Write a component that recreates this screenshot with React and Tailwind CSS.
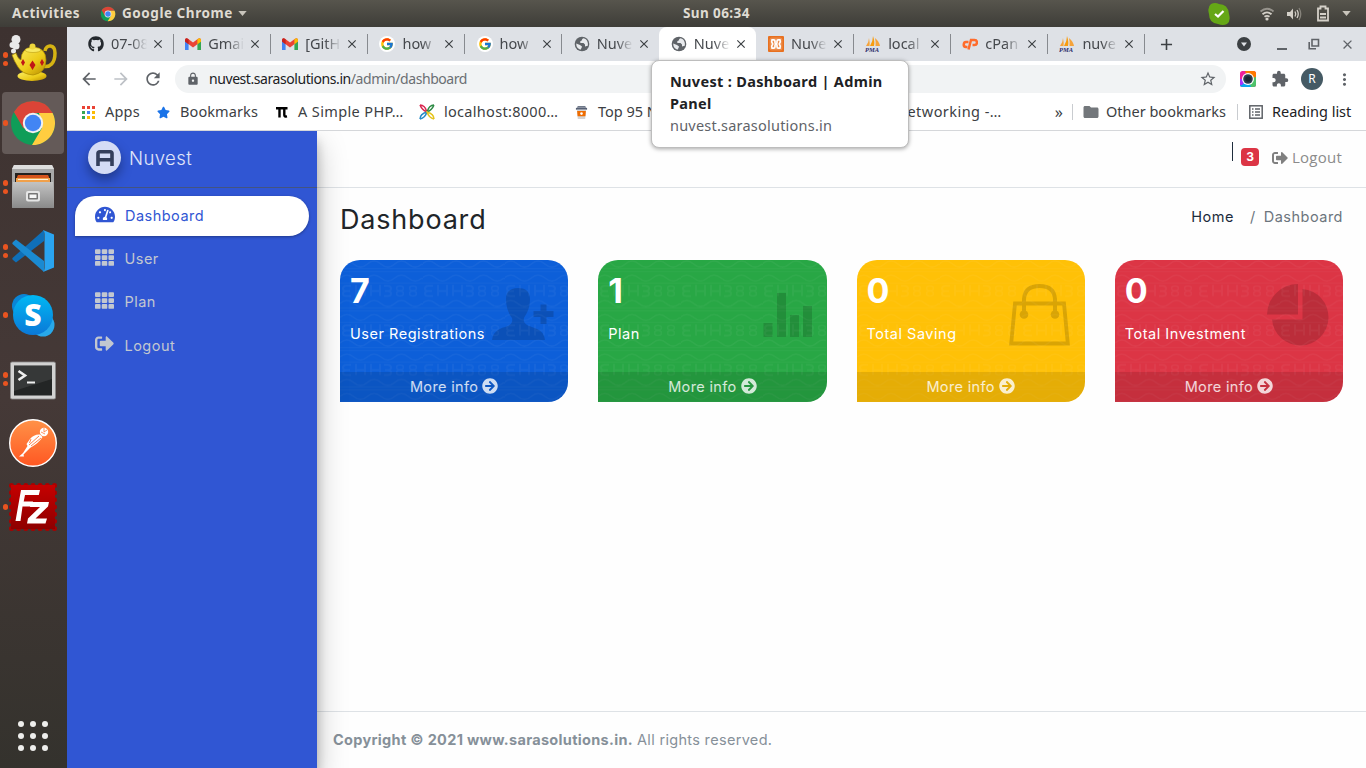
import React from "react";
import { FaGithub, FaTachometerAlt, FaTh, FaSignOutAlt, FaArrowCircleRight, FaStar } from "react-icons/fa";
import { FcGoogle } from "react-icons/fc";
import { MdLock, MdStarBorder, MdExtension, MdFolder, MdMoreVert, MdRefresh, MdArrowBack, MdArrowForward, MdClose, MdAdd } from "react-icons/md";

function ChromeLogo({ className }) {
  return (
    <svg viewBox="0 0 48 48" className={className}>
      <circle cx="24" cy="24" r="22" fill="#0f9d58" />
      <path d="M4.9 13A22 22 0 0 1 43.1 13Q44 14 43.6 14H24L14.5 29.5Z" fill="#db4437" />
      <path d="M43.6 14A22 22 0 0 1 23 46L33 29L30 14Z" fill="#ffcd40" />
      <circle cx="24" cy="24" r="10.2" fill="#f1f1f1" />
      <circle cx="24" cy="24" r="8.2" fill="#4285f4" />
    </svg>
  );
}

function Teapot() {
  return (
    <svg viewBox="0 0 48 48" className="size-12">
      <defs>
        <linearGradient id="tea" x1="0" y1="0" x2="1" y2="1">
          <stop offset="0" stopColor="#fdf06a" /><stop offset=".6" stopColor="#eccb18" /><stop offset="1" stopColor="#b78b00" />
        </linearGradient>
      </defs>
      <g fill="#e9e9e9"><circle cx="7" cy="4.500" r="4.500" /><circle cx="3.500" cy="10" r="3" /><circle cx="7" cy="11" r="3.500" /><circle cx="4.500" cy="16" r="2.500" /></g>
      <path d="M36 16C37 9 46 9 46 18C46 28 41 33 34 31" fill="none" stroke="#d6b313" strokeWidth="3.500" />
      <ellipse cx="23" cy="41" rx="14.500" ry="5" fill="url(#tea)" />
      <path d="M3 20L7 18Q9 24 12 25Q12 13 24 12Q37 13 37 25Q37 38 24 40Q13 39 9 32Q5 26 3 20Z" fill="url(#tea)" stroke="#a98600" strokeWidth=".7" />
      <ellipse cx="24" cy="15" rx="8" ry="2.500" fill="#f8e960" stroke="#b19009" strokeWidth=".5" />
      <circle cx="23.500" cy="11.500" r="3" fill="#eed63b" />
      <path d="M23.500 25.500L26.500 30L23.500 35L20.500 30ZM14 24L16 27.500L14 31L12 27.500ZM33 24L35 27.500L33 31L31 27.500Z" fill="#c01616" />
    </svg>
  );
}

function Cabinet() {
  return (
    <svg viewBox="0 0 48 48" className="size-12">
      <defs>
        <linearGradient id="cab" x1="0" y1="0" x2="0" y2="1"><stop offset="0" stopColor="#c3c3c3" /><stop offset="1" stopColor="#8a8a8a" /></linearGradient>
      </defs>
      <path d="M5 2H43L45 6V44H3V6Z" fill="#a8a8a8" />
      <path d="M5 2H43L45 6H3Z" fill="#dedede" />
      <rect x="6" y="10" width="36" height="11" fill="#24211f" />
      <path d="M8 14L9 12H39L40 14V21H8Z" fill="#d6541c" />
      <path d="M7 15H41V20H7Z" fill="#f0a04b" /><path d="M9 16H39V17H9Z" fill="#fff0d8" />
      <path d="M4 19H44L45 45H3Z" fill="url(#cab)" />
      <rect x="17" y="28" width="14" height="10.500" rx="2" fill="#e6e6e6" />
      <rect x="19" y="30" width="10" height="6.500" rx="1" fill="#777" /><rect x="20.500" y="31.500" width="7" height="3.500" fill="#f7f7f7" />
    </svg>
  );
}

function VsCode() {
  return (
    <svg viewBox="0 0 48 48" className="size-12">
      <path d="M35 3L3.500 31Q3 32 4 33L7 35.500L35 14Z" fill="#0f6fb8" />
      <path d="M35 45L3.500 17Q3 16 4 15L7 12.500L35 34Z" fill="#1a8ad2" />
      <path d="M34 3L45 7.500V40.500L34 45Q35.500 44 35.500 41V7Q35.500 4 34 3Z" fill="#2aa4f0" />
    </svg>
  );
}

function Skype() {
  return (
    <svg viewBox="0 0 48 48" className="size-12">
      <defs><linearGradient id="sky" x1="0" y1="0" x2="0" y2="1"><stop offset="0" stopColor="#00b8f4" /><stop offset="1" stopColor="#0b78d7" /></linearGradient></defs>
      <circle cx="15" cy="15" r="12" fill="#0a85d6" /><circle cx="34" cy="34" r="11.500" fill="#28a8ea" />
      <circle cx="24" cy="24" r="20" fill="url(#sky)" />
      <text x="24" y="35" textAnchor="middle" fontFamily="Open Sans, sans-serif" fontWeight="800" fontSize="30" fill="#fff">S</text>
    </svg>
  );
}

function Terminal() {
  return (
    <svg viewBox="0 0 48 48" className="size-12">
      <rect x="1.500" y="7" width="45" height="37" rx="1.500" fill="#d2d2d2" stroke="#8a8a8a" strokeWidth=".8" />
      <rect x="5" y="10.500" width="38" height="30" fill="#232525" />
      <path d="M5 11H43V24L5 36Z" fill="#fff" opacity=".09" />
      <path d="M9.500 16L16 20.500L9.500 25" fill="none" stroke="#eee" strokeWidth="2.600" />
      <path d="M18 27.500H26" stroke="#eee" strokeWidth="2" />
    </svg>
  );
}

function Postman() {
  return (
    <svg viewBox="0 0 48 48" className="size-12">
      <defs><linearGradient id="post" x1="0" y1="0" x2="0" y2="1"><stop offset="0" stopColor="#ff9248" /><stop offset="1" stopColor="#ff5722" /></linearGradient></defs>
      <circle cx="24" cy="24" r="23.300" fill="url(#post)" stroke="#fff" strokeWidth="1.400" />
      <circle cx="35" cy="13" r="4.200" fill="#fff" />
      <path d="M32 13L36 15M35 9V13L38 11" stroke="#ff7a3c" strokeWidth=".8" fill="none" />
      <path d="M31 15.500Q25 15 21 20L17.500 25L18.500 27L14 34L10 37.500L15 37.500L14.500 35.500L21 29Q30 24 33.500 18Z" fill="#fff" />
      <path d="M30 17L20 26M32 19L22 27M22 20L20.500 24" stroke="#ff7437" strokeWidth=".9" fill="none" />
    </svg>
  );
}

function FileZilla() {
  return (
    <svg viewBox="0 0 48 48" className="size-12">
      <defs><linearGradient id="fz" x1="0" y1="0" x2="0" y2="1"><stop offset="0" stopColor="#c50000" /><stop offset="1" stopColor="#8e0000" /></linearGradient></defs>
      <rect x="2.500" y="2.500" width="43" height="43" fill="none" stroke="#a90000" strokeWidth="5" strokeDasharray="0 7.170" strokeLinecap="round" />
      <rect x="2" y="2" width="44" height="44" fill="url(#fz)" />
      <path d="M12 7H31L29.800 12H16L14.700 18.500H24L22.800 23.500H13.500L11.500 38H6.500Z" fill="#fff" />
      <path d="M22 19H40L39 23.500L26.500 35.500H38L36.500 40.500H18L19 35.500L31 24H21Z" fill="#fff" />
    </svg>
  );
}

const dockItems = [
  { Icon: Teapot, dots: 2 },
  { Icon: () => <ChromeLogo className="size-12" />, dots: 1, active: true },
  { Icon: Cabinet, dots: 2 },
  { Icon: VsCode, dots: 2 },
  { Icon: Skype, dots: 1 },
  { Icon: Terminal, dots: 2 },
  { Icon: Postman, dots: 0 },
  { Icon: FileZilla, dots: 1 },
];

function Dock() {
  return (
    <aside className="flex w-[67px] shrink-0 flex-col bg-linear-to-b from-[#3d3230] via-[#453937] via-50% to-[#34322d]">
      {dockItems.map(({ Icon, dots, active }, i) => (
        <div key={i} className="flex h-16 items-center">
          <div className={active ? "ml-0.5 flex h-[62px] w-[62px] items-center rounded bg-[#645a58]" : "flex h-[62px] w-full items-center pl-0.5"}>
            <div className="flex w-[7px] shrink-0 flex-col items-center gap-[3px]">
              {Array.from({ length: dots }, (_, d) => <span key={d} className="size-[5.5px] rounded-full bg-[#e95420]" />)}
            </div>
            <Icon />
          </div>
        </div>
      ))}
      <div className="mt-auto mr-px mb-[17px] grid grid-cols-3 gap-[6px] self-center">
        {Array.from({ length: 9 }, (_, i) => <span key={i} className="size-1.5 rounded-full bg-[#eeeeec]" />)}
      </div>
    </aside>
  );
}

function TopBar() {
  return (
    <header className="grid h-[27px] shrink-0 grid-cols-[683px_1fr] items-center bg-linear-to-b from-[#57554d] to-[#3e3d38] text-[13.5px] font-bold text-[#dfdbd2]">
      <div className="flex items-center whitespace-nowrap">
        <span className="w-[88px] pl-3 tracking-[0.55px]">Activities</span>
        <ChromeLogo className="ml-3 size-4" />
        <span className="ml-[6px] w-[116px] tracking-[0.55px]">Google Chrome</span>
        <svg viewBox="0 0 10 6" className="h-[5px] w-[9px]"><path d="M0 0H10L5 6Z" fill="#c9c5bc" /></svg>
        <span className="ml-auto w-0 tracking-[0.4px]"><span className="inline-block w-[72px]">Sun 06:34</span></span>
      </div>
      <div className="flex items-center justify-end pr-[15px]">
        <svg viewBox="0 0 22 22" className="mr-[29px] size-[22px]"><path d="M3 1Q7 -1 11 1Q20 1 21 11Q23 18 19 21Q15 23 10 21Q1 20 1 11Q-1 4 3 1Z" fill="#65a716" /><path d="M7 11L10 13.500L15.500 8" fill="none" stroke="#fff" strokeWidth="2.200" /></svg>
        <svg viewBox="0 0 16 14" className="mr-[11px] h-[14px] w-4" fill="none" strokeWidth="1.800"><path d="M1.500 4.500Q8 -1 14.500 4.500" stroke="#96938c" /><path d="M3.500 7.300Q8 3.500 12.500 7.300M5.500 9.800Q8 8 10.500 9.800" stroke="#d4d0c8" /><circle cx="8" cy="12" r="1.600" fill="#d4d0c8" /></svg>
        <svg viewBox="0 0 16 14" className="mr-[14px] h-[14px] w-4"><path d="M1 5H4L7 1.500V12.500L4 9H1Z" fill="#d4d0c8" /><path d="M9 4.500Q10.500 7 9 9.500M11 3Q13.500 7 11 11" stroke="#d4d0c8" strokeWidth="1.300" fill="none" /><path d="M13 1Q16.500 7 13 13" stroke="#86837b" strokeWidth="1.300" fill="none" /></svg>
        <svg viewBox="0 0 14 17" className="mr-3 h-[17px] w-[14px]"><path d="M2 3.500H4.500V1.500H9.500V3.500H12V15.500H2Z" fill="none" stroke="#d4d0c8" strokeWidth="1.800" /><path d="M4 9H10M4 12.500H10" stroke="#d4d0c8" strokeWidth="1.800" /></svg>
        <svg viewBox="0 0 10 6" className="h-[5px] w-[9px]"><path d="M0 0H10L5 6Z" fill="#c9c5bc" /></svg>
      </div>
    </header>
  );
}

function Gmail() {
  return (
    <svg viewBox="0 0 16 12" className="h-3 w-4">
      <path d="M0 2V12H3.600V4.500Z" fill="#4285f4" /><path d="M12.400 4.500V12H16V2Z" fill="#34a853" />
      <path d="M0 1.500Q1 -.5 3 .7L8 4.500L13 .7Q15 -.5 16 1.500V3.500L8 9.500L0 3.500Z" fill="#ea4335" />
      <path d="M12.400 1.200Q15.500 -1 16 1.800V3.500L12.400 6.200Z" fill="#fbbc04" /><path d="M0 1.800Q.5 -1 3.600 1.200V6.200L0 3.500Z" fill="#c5221f" />
    </svg>
  );
}
function GoogleIcon() {
  return <span className="flex size-4 items-center justify-center rounded-full bg-white"><FcGoogle className="size-[14px]" /></span>;
}
function Globe() {
  return (
    <svg viewBox="0 0 16 16" className="size-4">
      <circle cx="8" cy="8" r="7.300" fill="#5f6368" />
      <path d="M9.500 2.300Q7.600 2.600 8 4.200L6.300 5.300V7H9.500L11 8.600V10.500L13.800 9.800Q14.500 5.500 11.500 3Z" fill="#e8eaed" />
      <path d="M2.200 7.500L6 9L8 10.500L7.500 12L6.500 13.800Q2.200 12.300 2.200 7.500Z" fill="#e8eaed" />
    </svg>
  );
}
function Xampp() {
  return (
    <svg viewBox="0 0 16 16" className="size-4"><rect width="16" height="16" rx="1" fill="#e8701f" /><rect x="1.500" y="1.500" width="13" height="13" rx="2.500" fill="#fff" opacity=".2" /><path d="M4 3.800H5.800Q7 3.800 7 5.200V6.500Q7 8 8 8T9 6.500V5.200Q9 3.800 10.200 3.800H12Q13 5.800 11.300 8Q13 10.200 12 12.200H10.200Q9 12.200 9 10.800V9.500Q9 8 8 8T7 9.500V10.800Q7 12.200 5.800 12.200H4Q3 10.200 4.700 8Q3 5.800 4 3.800Z" fill="none" stroke="#fff" strokeWidth="1.700" /></svg>
  );
}
function Pma() {
  return (
    <svg viewBox="0 0 16 16" className="size-4"><path d="M1 10Q4 6 4 2Q5 7 4.500 10Z" fill="#f5a33a" /><path d="M5 10Q8 5 8 0Q10 6 9 10Z" fill="#f89c0e" /><path d="M10 2Q11 6 10.500 10H15Q14 5 10 2Z" fill="#f5a33a" /><text x="0" y="15.500" fontSize="6.500" fontStyle="italic" fontWeight="700" fontFamily="Liberation Serif, serif" fill="#2f2e6b">PMA</text></svg>
  );
}
function CPanel() {
  return (
    <svg viewBox="0 0 16 12" className="h-3 w-4" fill="none" stroke="#ff6c2c" strokeWidth="2.500"><path d="M6.500 4H4.500A2.500 2.500 0 0 0 4 9H5.500" /><path d="M6.500 11.500L9 2H12.500A2.400 2.400 0 0 1 12.500 6.900H10.500" /></svg>
  );
}

const tabs = [
  { Icon: () => <FaGithub className="size-4 text-[#24292e]" />, title: "07-08" },
  { Icon: Gmail, title: "Gmai" },
  { Icon: Gmail, title: "[GitH" },
  { Icon: GoogleIcon, title: "how" },
  { Icon: GoogleIcon, title: "how" },
  { Icon: Globe, title: "Nuve" },
  { Icon: Globe, title: "Nuve", active: true },
  { Icon: Xampp, title: "Nuve" },
  { Icon: Pma, title: "local" },
  { Icon: CPanel, title: "cPan" },
  { Icon: Pma, title: "nuve" },
];

function TabStrip() {
  return (
    <div className="flex h-[34px] shrink-0 items-center bg-[#dee1e6] pl-[9.5px] text-[14.5px] text-[#45484c]">
      {tabs.map(({ Icon, title, active }, i) => (
        <div key={i} className={"flex h-full w-[97.15px] shrink-0 items-center " + (active ? "rounded-t-lg bg-white" : "")}>
          <span className="ml-[11.5px] flex size-4 shrink-0 items-center justify-center"><Icon /></span>
          <span className="ml-[7px] w-[36px] overflow-hidden mask-r-from-55% mask-r-to-100% whitespace-nowrap">{title}</span>
          <MdClose className="ml-[4px] size-[14px] shrink-0 text-[#3c4043]" />
          <span className={"ml-auto h-5 w-px " + (i === 5 || i === 6 ? "" : "bg-[#878a8f]")} />
        </div>
      ))}
      <MdAdd className="ml-3 size-[19px] text-[#3c4043]" />
      <div className="ml-auto flex items-center pr-[11px]">
        <svg viewBox="0 0 14 14" className="size-[14px]"><circle cx="7" cy="7" r="7" fill="#3c4043" /><path d="M4 5.500H10L7 9.500Z" fill="#dee1e6" /></svg>
        <span className="mt-[9px] ml-[26px] h-[2px] w-[10px] bg-[#5f6368]" />
        <svg viewBox="0 0 12 12" className="ml-[21px] size-3" fill="none" stroke="#5f6368" strokeWidth="1.600"><path d="M4 1.500H10.500V8H4ZM1.200 4V10.800H8" /></svg>
        <MdClose className="ml-[20px] size-[15px] text-[#5f6368]" />
      </div>
    </div>
  );
}

function Toolbar() {
  return (
    <div className="flex h-9 shrink-0 items-center bg-white pr-[14px] pl-[12px] text-[#5f6368]">
      <MdArrowBack className="size-5" />
      <MdArrowForward className="ml-[12px] size-5 text-[#bdc1c6]" />
      <MdRefresh className="ml-[12px] size-5" />
      <div className="ml-[12px] flex h-7 w-[1051px] shrink-0 items-center rounded-full bg-[#f1f3f4] pr-[9px] pl-[11px]">
        <MdLock className="size-[14px]" />
        <span className="mb-px ml-[9px] text-[14px] tracking-[-0.43px] text-[#6b6f73]"><span className="text-[#202124]">nuvest.sarasolutions.in</span>/admin/dashboard</span>
        <MdStarBorder className="ml-auto size-[18px]" />
      </div>
      <svg viewBox="0 0 16 16" className="ml-[14px] size-4 shrink-0"><defs><clipPath id="camclip"><rect width="16" height="16" rx="2.500" /></clipPath></defs><g clipPath="url(#camclip)"><path d="M0 0H16V16H0Z" fill="#f0209c" /><path d="M5 0H16V8H8Z" fill="#ff7a00" /><path d="M16 6V16H9L8 8Z" fill="#4ec26a" /><path d="M0 11L8 8L11 16H0Z" fill="#08a8f0" /><path d="M0 8L8 8L2 14L0 14Z" fill="#a633ff" /></g><circle cx="8" cy="8" r="6" fill="#fff" /><circle cx="8" cy="8" r="4.800" fill="#2d3e50" /><circle cx="8" cy="8" r="2.800" fill="#1c2733" /></svg>
      <MdExtension className="ml-[15px] size-[18px] shrink-0" />
      <span className="ml-[12px] flex size-[22px] shrink-0 items-center justify-center rounded-full bg-[#455a64] text-[12px] text-white">R</span>
      <MdMoreVert className="ml-auto -mr-[2px] size-[19px] shrink-0" />
    </div>
  );
}

const appColors = ["bg-[#ea4335]", "bg-[#ea4335]", "bg-[#ea4335]", "bg-[#34a853]", "bg-[#4285f4]", "bg-[#fbbc04]", "bg-[#34a853]", "bg-[#fbbc04]", "bg-[#fbbc04]"];

function Bookmarks() {
  return (
    <div className="flex h-[34px] shrink-0 items-center border-b border-[#d5d7da] bg-white pb-[3px] pl-[15px] text-[14.5px] whitespace-nowrap text-[#3c4043]">
      <div className="flex w-[75px] shrink-0 items-center">
        <span className="grid grid-cols-3 gap-[2px]">{appColors.map((c, i) => <span key={i} className={"size-[3px] " + c} />)}</span>
        <span className="ml-[10px] tracking-[0.2px]">Apps</span>
      </div>
      <div className="flex w-[119px] shrink-0 items-center"><FaStar className="size-[13px] text-[#1a73e8]" /><span className="ml-[10px] tracking-[0.1px]">Bookmarks</span></div>
      <div className="flex w-[143px] shrink-0 items-center"><svg viewBox="0 0 12 12" className="size-3" fill="none" stroke="#000" strokeWidth="2.400"><path d="M0 2.200H11.500M3.500 2V11.500M8.300 2V9Q8.300 11 11 10.400" /></svg><span className="ml-[10px] tracking-[0.38px]">A Simple PHP…</span></div>
      <div className="flex w-[156px] shrink-0 items-center">
        <svg viewBox="0 0 16 16" className="size-4" fill="none" strokeWidth="1.500"><path d="M1 1Q6 1 8 8Q3 6 1 1" stroke="#d9264f" /><path d="M15 1Q10 1 8 8Q13 6 15 1" stroke="#2f8b46" /><path d="M1 15Q1 10 8 8Q6 14 1 15" stroke="#2489c5" /><path d="M15 15Q15 10 8 8Q10 14 15 15" stroke="#e5c31b" /></svg>
        <span className="ml-[9px] tracking-[0.3px]">localhost:8000…</span>
      </div>
      <div className="flex w-[321px] shrink-0 items-center">
        <svg viewBox="0 0 14 16" className="h-[15px] w-[13px]"><path d="M3 1H11L12 3H2Z" fill="#70798a" /><rect x="1" y="3" width="12" height="2" fill="#566074" /><path d="M2 5H12L11 15H3Z" fill="#d5d3d2" /><path d="M2.300 6.500H11.700L11.200 12H2.800Z" fill="#ef6c00" /><circle cx="7" cy="9.200" r="1.400" fill="#fff" /></svg>
        <span className="ml-[10px]">Top 95 N</span>
      </div>
      <span className="tracking-[0.45px]">Networking -…</span>
      <div className="ml-auto flex items-center pr-[14px]">
        <span className="text-[16px]">»</span>
        <span className="ml-[9px] h-4 w-px bg-[#c9ccd0]" />
        <MdFolder className="ml-[9px] size-[18px] text-[#73777b]" />
        <span className="ml-[6px] w-[121px]">Other bookmarks</span>
        <span className="ml-[10px] h-4 w-px bg-[#c9ccd0]" />
        <svg viewBox="0 0 14 14" className="ml-[11px] size-[14px]" fill="none" stroke="#5f6368" strokeWidth="1.500"><rect x=".8" y=".8" width="12.400" height="12.400" /><path d="M3 4H4.500M6 4H11M3 7H4.500M6 7H11M3 10H4.500M6 10H11" /></svg>
        <span className="ml-[9px] w-[80px] text-[#202124]">Reading list</span>
      </div>
    </div>
  );
}

const nav = [
  { Icon: FaTachometerAlt, label: "Dashboard", active: true },
  { Icon: FaTh, label: "User" },
  { Icon: FaTh, label: "Plan" },
  { Icon: FaSignOutAlt, label: "Logout" },
];

function Sidebar() {
  return (
    <aside className="z-10 w-[250px] shrink-0 bg-[#3056d3] font-[Inter,sans-serif] shadow-[0_14px_28px_rgba(0,0,0,.25),0_10px_10px_rgba(0,0,0,.22)]">
      <div className="flex h-[57px] items-center border-b border-[#4b545c]/70 pl-[21px]">
        <span className="mb-[3px] flex size-[33px] items-center justify-center rounded-full bg-[#d4dcf5] shadow-[0_6px_12px_rgba(0,0,0,.35)]">
          <svg viewBox="0 0 18 16" className="h-4 w-[18px]" fill="none" stroke="#343f5b" strokeWidth="3.600"><path d="M2 16V3.500Q2 1.800 4 1.800H14Q16 1.800 16 3.500V16M2 9.800H16" /></svg>
        </span>
        <span className="ml-2 text-[18.5px] font-light tracking-[0.4px] text-white/85">Nuvest</span>
      </div>
      <nav className="flex flex-col gap-[3.3px] p-2">
        {nav.map(({ Icon, label, active }) => (
          <a key={label} className={"flex h-10 items-center pl-5 text-[14.5px] tracking-[0.48px] " + (active ? "rounded-[24px] rounded-bl-none bg-white text-[#3056d3] shadow-[0_1px_3px_rgba(0,0,0,.35)]" : "pb-px text-[#c2c7d0]")}>
            <Icon className={"mb-[3px] size-[19px] " + (active ? "w-[20px]" : "")} /><span className={active ? "ml-[10px]" : "ml-[10.5px]"}>{label}</span>
          </a>
        ))}
      </nav>
    </aside>
  );
}

function CardPattern({ id }) {
  return (
    <svg className="pointer-events-none absolute inset-0 h-full w-full text-white opacity-[0.042]">
      <defs>
        <pattern id={id} width="82" height="39.500" patternUnits="userSpaceOnUse" patternTransform="translate(0 -2)">
          <g fill="none" stroke="currentColor" strokeWidth="1.500">
            <path d="M0 6Q6.800 0 13.670 6T27.330 6Q34 0 41 6T54.670 6Q61.500 0 68.330 6T82 6" />
            <path d="M0 20Q6.800 14 13.670 20T27.330 20Q34 14 41 20T54.670 20Q61.500 14 68.330 20T82 20" />
            <path d="M0 10.500H82M0 13.500H82M0 25H82" strokeWidth="1" />
            <path d="M11 28H6Q3 28 3 30.500T6 33H10M6 33Q3 33 3 35.500T6 38H11" strokeWidth="2" />
            <path d="M16 27V38M16 33H25M25 27V38M31 27V38M31 33H40M40 27V38" strokeWidth="2" />
            <path d="M44 28H48Q51 28 51 30.500T48 33H45M48 33Q51 33 51 35.500T48 38H44" strokeWidth="2" />
            <ellipse cx="60" cy="30.300" rx="3.500" ry="2.300" /><ellipse cx="60" cy="35.500" rx="3.500" ry="2.500" />
            <ellipse cx="73" cy="30.300" rx="3.500" ry="2.300" /><ellipse cx="73" cy="35.500" rx="3.500" ry="2.500" />
          </g>
        </pattern>
      </defs>
      <rect width="100%" height="100%" fill={`url(#${id})`} />
    </svg>
  );
}

const cards = [
  { id: "users", value: "7", label: "User Registrations", bg: "bg-[#0d5fd9]", art: <path d="M26 1C33 1 38 4 38 12C38 21 35 26 32 31C31 36 34 38 40 40C49 43 52 46 53 53H0C1 46 5 42 13 40C19 38 21 36 20 31C17 27 14 21 14 12C14 4 19 1 26 1ZM48.500 17.500H54.500V24H61.500V30H54.500V37H48.500V30H41.500V24H48.500Z" transform="translate(1 5)" /> },
  { id: "plan", value: "1", label: "Plan", bg: "bg-[#28a745]", art: <path d="M13.500 41H22.500V55H13.500ZM27 11H36V55H27ZM40 33H49V55H40ZM53 24H62V55H53Z" /> },
  { id: "saving", value: "0", label: "Total Saving", bg: "bg-[#ffc107]", art: <g transform="translate(1 0)"><path d="M6 21.500H55L58.800 61.500H2.200Z" fill="none" stroke="#000" strokeWidth="3.800" /><path d="M15 33V17Q16 4 30.500 4T46 17V33" fill="none" stroke="#000" strokeWidth="4" /><circle cx="15" cy="32.500" r="4.300" /><circle cx="46" cy="32.500" r="4.300" /></g> },
  { id: "investment", value: "0", label: "Total Investment", bg: "bg-[#dc3545]", art: <path d="M32 2V32.500H1A31 31 0 0 1 32 2ZM36.500 7A28.300 28.300 0 1 1 6 37.500H36.500Z" /> },
];

function StatCard({ id, value, label, bg, art }) {
  return (
    <section className={"relative flex h-[142px] flex-col overflow-hidden rounded-[20px] rounded-bl-none text-white " + bg}>
      <div className="flex h-28 justify-between pr-[15px] pl-[10px]">
        <div className="relative z-10">
          <div className="mt-[10px] text-[34px] leading-[42px] font-bold">{value}</div>
          <div className="mt-[10px] text-[14.5px] leading-6 tracking-[0.52px] whitespace-nowrap">{label}</div>
        </div>
        <svg viewBox="0 0 62 65" className="mt-[22px] -ml-8 h-[65px] w-[62px] shrink-0 overflow-visible opacity-15">{art}</svg>
      </div>
      <CardPattern id={id} />
      <a className="relative flex h-[30px] items-center justify-center gap-1 bg-black/10 text-[14.5px] tracking-[0.35px] text-white/80">More info <FaArrowCircleRight className="mb-0.5 size-4" /></a>
    </section>
  );
}

function Dashboard() {
  return (
    <main className="flex min-w-0 flex-1 flex-col bg-[#fefefe] font-[Inter,sans-serif]">
      <div className="flex h-[57px] shrink-0 items-center justify-end border-b border-[#dee2e6] pr-[24px]">
        <span className="mr-2 mb-[16px] h-[19px] w-px bg-[#1f2d3d]" />
        <span className="mr-[13px] mb-[5px] flex size-[18px] items-center justify-center rounded bg-[#dc3545] text-[12px] font-bold text-white">3</span>
        <FaSignOutAlt className="mb-[3px] size-4 text-[#808080]" />
        <span className="mb-[3px] ml-1 w-[50px] font-['Open_Sans'] text-[15px] tracking-[0.25px] text-[#8b8b8b]">Logout</span>
      </div>
      <div className="flex h-[72px] shrink-0 items-start justify-between pr-[23px] pl-[23px]">
        <h1 className="mt-[12px] text-[27px] leading-10 tracking-[0.8px] text-[#212529]">Dashboard</h1>
        <div className="mt-[17px] flex text-[14.5px] leading-6 tracking-[0.5px] text-[#6c757d]"><span className="text-[#1b2b3c]">Home</span><span className="mr-2 ml-4">/</span>Dashboard</div>
      </div>
      <div className="grid shrink-0 grid-cols-4 gap-[30px] pr-[23px] pl-[23px]">
        {cards.map((c) => <StatCard key={c.id} {...c} />)}
      </div>
      <footer className="mt-auto flex h-[57px] shrink-0 items-center border-t border-[#dee2e6] pl-4 text-[14.5px] tracking-[0.32px] text-[#869099]">
        <strong className="mr-1 font-bold tracking-[0.32px]">Copyright © 2021 www.sarasolutions.in.</strong> All rights reserved.
      </footer>
    </main>
  );
}

export default function App() {
  return (
    <div className="relative flex h-[768px] w-[1366px] flex-col overflow-hidden font-['Noto_Sans',sans-serif]">
      <TopBar />
      <div className="flex min-h-0 flex-1">
        <Dock />
        <div className="flex min-w-0 flex-1 flex-col">
          <TabStrip />
          <Toolbar />
          <Bookmarks />
          <div className="flex min-h-0 flex-1 overflow-hidden">
            <Sidebar />
            <Dashboard />
          </div>
        </div>
      </div>
      <div className="absolute top-[60px] left-[651px] z-20 h-[88px] w-[258px] rounded-lg border border-[#bdbdbd] bg-white pt-[9px] pl-[18px] text-[14.5px] leading-[22px] shadow-[0_1px_4px_rgba(0,0,0,.35)]">
        <div className="font-bold tracking-[0.32px] text-[#202124]">Nuvest : Dashboard | Admin<br />Panel</div>
        <div className="tracking-[0.22px] text-[#5f6368]">nuvest.sarasolutions.in</div>
      </div>
    </div>
  );
}
